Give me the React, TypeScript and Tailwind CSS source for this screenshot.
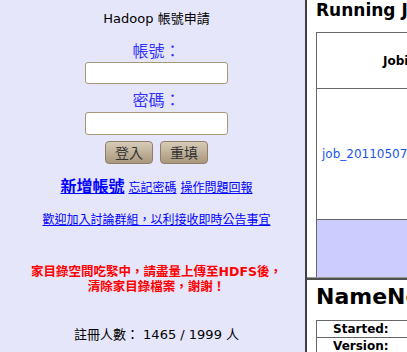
import React from "react";

const cjk = '"DejaVu Sans", "Noto Sans CJK TC", sans-serif';

export default function App() {
  return (
    <div className="flex w-[407px] h-[352px] overflow-hidden bg-white" style={{ fontFamily: cjk }}>
      {/* left frame */}
      <div className="w-[305px] h-full bg-[#e6e6fa] shrink-0 pl-[8px] flex flex-col items-center">
        <div className="mt-[11px] text-[13px] leading-[16px] text-black">Hadoop 帳號申請</div>
        <div className="mt-[16px] text-[16px] leading-[18px] text-[#3333ff]">帳號：</div>
        <input className="mt-[1px] w-[143px] h-[22px] bg-white border border-[#a89878] rounded-[3px]" />
        <div className="mt-[8px] text-[16px] leading-[18px] text-[#3333ff]">密碼：</div>
        <input className="mt-[2px] w-[143px] h-[23px] bg-white border border-[#a89878] rounded-[3px]" />
        <div className="mt-[6px] flex gap-[7px]">
          <button className="w-[48px] h-[23px] rounded-[4px] border border-[#8f7f66] bg-gradient-to-b from-[#d8ccb8] to-[#a8977c] text-[14px] leading-[20px] text-[#333]">登入</button>
          <button className="w-[48px] h-[23px] rounded-[4px] border border-[#8f7f66] bg-gradient-to-b from-[#d8ccb8] to-[#a8977c] text-[14px] leading-[20px] text-[#333]">重填</button>
        </div>
        <div className="mt-[14px] flex items-baseline gap-[4px] text-[#0000ff]">
          <a className="underline font-bold text-[16px] leading-[18px]">新增帳號</a>
          <a className="underline text-[12px] leading-[14px]">忘記密碼</a>
          <a className="underline text-[12px] leading-[14px]">操作問題回報</a>
        </div>
        <a className="mt-[17px] underline text-[12px] leading-[14px] text-[#0000ff]">歡迎加入討論群組，以利接收即時公告事宜</a>
        <div className="mt-[37px] text-center text-[#ff0000] font-bold text-[12.5px] leading-[15px]">
          家目錄空間吃緊中，請盡量上傳至HDFS後，
          <br />
          清除家目錄檔案，謝謝！
        </div>
        <div className="mt-[33px] text-[13px] leading-[15px] text-black">註冊人數： 1465 / 1999 人</div>
      </div>
      {/* frame border */}
      <div className="w-[2px] h-full bg-[#404040] shrink-0" />
      {/* right frames */}
      <div className="flex-1 flex flex-col h-full overflow-hidden">
        <div className="h-[277px] overflow-hidden pl-[9px] pt-[0px] bg-white">
          <div className="font-bold text-[17px] leading-[20px] whitespace-nowrap text-black">Running Jobs</div>
          <div className="mt-[12px] w-[300px] border border-[#666] border-r-0 text-[12px]">
            <div className="h-[56px] border-b border-[#666] flex items-center pl-[66px] font-bold">Jobid</div>
            <div className="h-[131px] border-b border-[#666] flex items-center pl-[5px] text-[#1a56e8] whitespace-nowrap">job_201105071234_0001</div>
            <div className="h-[80px] bg-[#ccccff]" />
          </div>
        </div>
        <div className="h-[3px] shrink-0 bg-[#999] border-b-2 border-[#505050]" />
        <div className="flex-1 overflow-hidden pl-[9px] bg-white">
          <div className="mt-[4px] font-bold text-[22px] leading-[26px] whitespace-nowrap text-black">NameNode</div>
          <div className="mt-[10px] w-[300px] border border-[#666] border-r-0 text-[12px] font-bold">
            <div className="h-[17px] border-b border-[#666] pl-[16px] leading-[16px]">Started:</div>
            <div className="h-[17px] pl-[16px] leading-[16px]">Version:</div>
          </div>
        </div>
      </div>
    </div>
  );
}
